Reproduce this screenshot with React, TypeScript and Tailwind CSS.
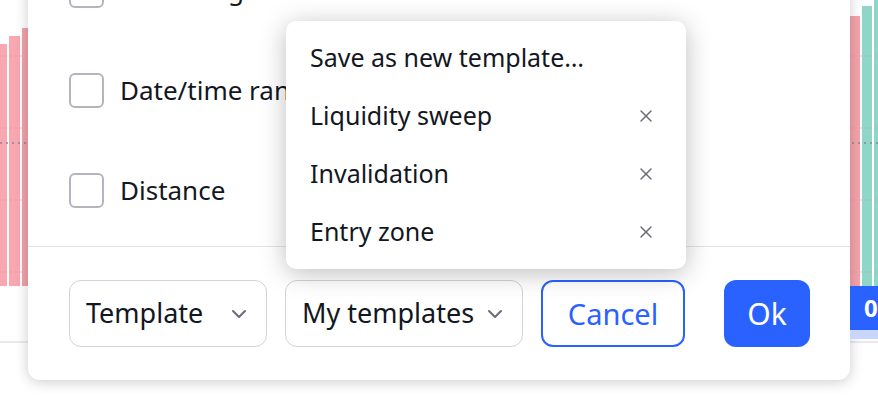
import { X, ChevronDown } from 'lucide-react';

const font = { fontFamily: '"Noto Sans", "Open Sans", sans-serif' };

function ChartBackdrop() {
  return (
    <svg className="absolute inset-0" width={878} height={408}>
      {/* left bars */}
      <rect x={0} y={44} width={7} height={242} fill="#f9a7b0" />
      <rect x={9} y={36} width={11} height={250} fill="#f9a7b0" />
      <rect x={22} y={28} width={6} height={258} fill="#f2a2aa" />
      {/* right bars */}
      <rect x={850} y={16} width={10} height={270} fill="#f5a3ab" />
      <rect x={862} y={6} width={10} height={280} fill="#8fd6c9" />
      <rect x={874} y={0} width={4} height={286} fill="#8fd6c9" />
      {/* grid */}
      {[56, 128, 200, 272].map((y) => (
        <line key={y} x1={0} x2={878} y1={y} y2={y} stroke="#e48c97" strokeDasharray="2 3" strokeOpacity={0.5} />
      ))}
      <line x1={0} x2={878} y1={143} y2={143} stroke="#868993" strokeWidth={1.5} strokeDasharray="2 4" />
      <line x1={0} x2={878} y1={342} y2={342} stroke="#e0e3eb" strokeWidth={1.5} />
    </svg>
  );
}

function Checkbox({ label }: { label: string }) {
  return (
    <div className="flex h-[100px] items-center gap-[16px] pl-[41px]">
      <div className="h-[35px] w-[35px] shrink-0 rounded-[6px] border-2 border-[#b2b5be] bg-white" />
      <span className="whitespace-nowrap text-[26px] text-[#131722]">{label}</span>
    </div>
  );
}

function Select({ label, width }: { label: string; width: string }) {
  return (
    <div className={`flex h-[67px] items-center justify-between rounded-[12px] border-[1.5px] border-[#d1d4dc] bg-white pl-[16px] pr-[15px] ${width}`}>
      <span className="whitespace-nowrap text-[27px] text-[#131722]">{label}</span>
      <ChevronDown className="h-[24px] w-[24px] shrink-0 text-[#6a6d78]" strokeWidth={2} />
    </div>
  );
}

const items = ['Liquidity sweep', 'Invalidation', 'Entry zone'];

export default function App() {
  return (
    <div className="relative h-[408px] w-[878px] overflow-hidden bg-white" style={font}>
      <ChartBackdrop />
      <div className="absolute left-[28px] top-[-60px] flex h-[440px] w-[822px] flex-col rounded-[12px] bg-white shadow-[0_2px_14px_rgba(0,0,0,0.2)]">
        <div className="flex flex-col pb-[6px]">
          <Checkbox label="Price range" />
          <Checkbox label="Date/time range" />
          <Checkbox label="Distance" />
        </div>
        <div className="flex flex-1 items-center gap-[18px] border-t-[1.5px] border-[#e0e3eb] pl-[41px] pr-[40px]">
          <Select label="Template" width="w-[198px]" />
          <Select label="My templates" width="w-[238px]" />
          <button className="h-[67px] w-[144px] rounded-[12px] border-2 border-[#2962ff] bg-white text-[29px] text-[#2962ff]">
            Cancel
          </button>
          <button className="ml-auto h-[67px] w-[86px] rounded-[12px] bg-[#2962ff] text-[30px] text-white">Ok</button>
        </div>
      </div>
      <div className="absolute left-[850px] top-[286px] flex h-[44px] w-[40px] items-center bg-[#2962ff] pl-[14px] text-[24px] font-bold text-white">
        0
      </div>
      <div className="absolute left-[850px] top-[330px] h-[9px] w-[28px] bg-[#c9d6ff]" />
      <div className="absolute left-[286px] top-[21px] w-[400px] rounded-[10px] bg-white py-[8px] shadow-[0_4px_26px_rgba(0,0,0,0.26)]">
        <div className="flex h-[58px] items-center px-[24px] text-[25px] text-[#131722]">Save as new template…</div>
        {items.map((it) => (
          <div key={it} className="flex h-[58px] items-center justify-between pl-[24px] pr-[30px] text-[25px] text-[#131722]">
            <span>{it}</span>
            <X className="h-[20px] w-[20px] text-[#6a6d78]" strokeWidth={1.75} />
          </div>
        ))}
      </div>
    </div>
  );
}
